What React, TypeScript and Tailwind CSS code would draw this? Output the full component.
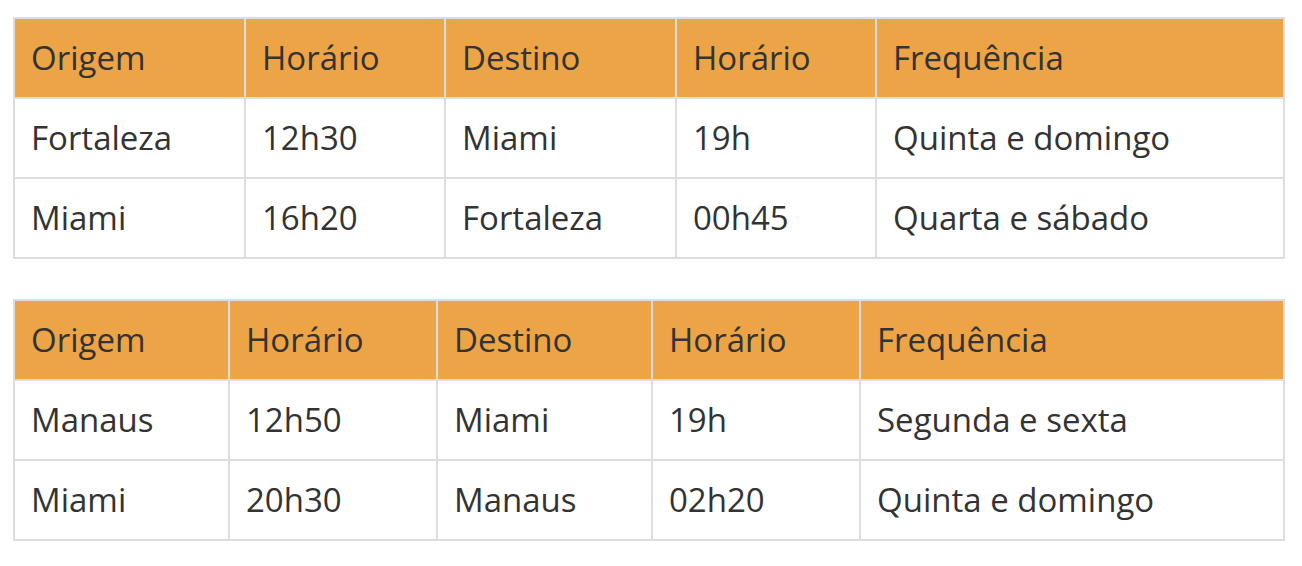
import React from 'react';

type Table = {
  widths: number[];
  rows: string[][];
};

const header = ['Origem', 'Horário', 'Destino', 'Horário', 'Frequência'];

const tables: Table[] = [
  {
    widths: [231, 200, 231, 200, 408],
    rows: [
      ['Fortaleza', '12h30', 'Miami', '19h', 'Quinta e domingo'],
      ['Miami', '16h20', 'Fortaleza', '00h45', 'Quarta e sábado'],
    ],
  },
  {
    widths: [215, 208, 215, 208, 424],
    rows: [
      ['Manaus', '12h50', 'Miami', '19h', 'Segunda e sexta'],
      ['Miami', '20h30', 'Manaus', '02h20', 'Quinta e domingo'],
    ],
  },
];

function FlightTable({ table }: { table: Table }) {
  return (
    <table className="table-fixed border-collapse border-2 border-[#dddddd] w-[1272px]">
      <colgroup>
        {table.widths.map((w, i) => (
          <col key={i} style={{ width: w }} />
        ))}
      </colgroup>
      <thead>
        <tr className="bg-[#eda446] h-[80px]">
          {header.map((h, i) => (
            <th key={i} className="border-2 border-[#dddddd] px-[16px] text-left font-normal align-middle">
              {h}
            </th>
          ))}
        </tr>
      </thead>
      <tbody>
        {table.rows.map((row, r) => (
          <tr key={r} className="h-[80px] bg-white">
            {row.map((c, i) => (
              <td key={i} className="border-2 border-[#dddddd] px-[16px] align-middle">
                {c}
              </td>
            ))}
          </tr>
        ))}
      </tbody>
    </table>
  );
}

export default function App() {
  return (
    <div
      className="w-[1302px] h-[566px] bg-white pt-[17px] pl-[13px] text-[#333333] text-[33px] leading-[1.3]"
      style={{ fontFamily: '"Open Sans", sans-serif' }}
    >
      <div className="flex flex-col gap-[40px]">
        {tables.map((t, i) => (
          <FlightTable key={i} table={t} />
        ))}
      </div>
    </div>
  );
}
